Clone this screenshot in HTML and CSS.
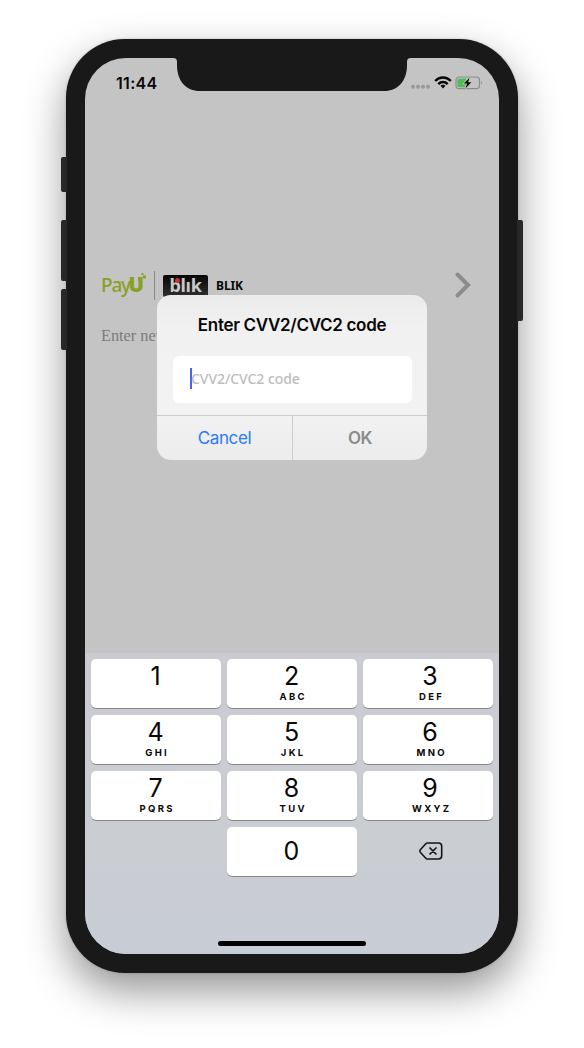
FILE: index.html
```html
<!DOCTYPE html>
<html lang="en">
<head>
<meta charset="utf-8">
<title>Enter CVV2/CVC2 code</title>
<link rel="stylesheet" href="styles.css">
</head>
<body>
<div class="phone">
  <i class="button mute"></i><i class="button vol-up"></i><i class="button vol-down"></i><i class="button power"></i>
  <div class="screen">
    <svg class="notch" width="238" height="33" viewBox="0 0 238 33"><path d="M0 0C3 0 4 1.500 4 4V7C4 23 13 33 27 33H211C225 33 234 23 234 7V4C234 1.500 235 0 238 0Z" fill="#191919"/></svg>
    <header class="status">
      <span class="time">11:44</span>
      <svg class="indicators" width="74" height="18" viewBox="0 0 74 18">
        <g fill="#999"><circle cx="5" cy="12.700" r="2"/><circle cx="10" cy="12.700" r="2"/><circle cx="15" cy="12.700" r="2"/><circle cx="20" cy="12.700" r="2"/></g>
        <g fill="none" stroke="#080808" stroke-width="2.500"><path d="M27.200 7C31.500 2.400 38.500 2.400 42.800 7"/><path d="M30.300 10.100C32.900 7.400 37.100 7.400 39.700 10.100"/></g>
        <path d="M32.500 11.800Q35 9.900 37.500 11.800L35 14.500Z" fill="#080808"/>
        <rect x="48" y="3" width="23.500" height="11.700" rx="3.200" fill="none" stroke="#8c8c8c" stroke-width="1.200"/>
        <path d="M73.100 6.800Q74.900 8.800 73.100 10.800Z" fill="#858585"/>
        <path d="M51 4.500H58.800L55.500 9.400H58L57 13.200H51Q49.300 13.200 49.300 11.500V6.200Q49.300 4.500 51 4.500Z" fill="#4fbd59"/>
        <path d="M61.600 3.800L55.800 9.500H59.100L57.400 14.400L63.300 8.300H60.100Z" fill="#080808" stroke="#c4c4c4" stroke-width="1.400" paint-order="stroke"/>
      </svg>
    </header>
    <main class="content">
      <div class="method">
        <div class="payu"><span class="pay">Pay</span><span class="u">U</span><svg class="pixels" width="9" height="9" viewBox="0 0 9 9"><path d="M3.500 0H5.500V2H3.500ZM5 2.500H8V5.500H5ZM0 4H4V8H0Z" fill="#8ba325"/></svg></div>
        <i class="divider"></i>
        <div class="blik-logo"><i class="dot"></i>blık</div>
        <strong class="method-name">BLIK</strong>
        <svg class="chevron" width="18" height="28" viewBox="0 0 18 28"><path d="M3.500 3.500L14 14L3.500 24.500" fill="none" stroke="#8c8c8c" stroke-width="4" stroke-linecap="round"/></svg>
      </div>
      <p class="new-card">Enter new</p>
    </main>
    <section class="keyboard">
      <div class="key"><b>1</b></div>
      <div class="key"><b>2</b><small>ABC</small></div>
      <div class="key third"><b>3</b><small>DEF</small></div>
      <div class="key"><b>4</b><small>GHI</small></div>
      <div class="key"><b>5</b><small>JKL</small></div>
      <div class="key third"><b>6</b><small>MNO</small></div>
      <div class="key"><b>7</b><small>PQRS</small></div>
      <div class="key"><b>8</b><small>TUV</small></div>
      <div class="key third"><b>9</b><small>WXYZ</small></div>
      <div class="blank"></div>
      <div class="key zero"><b>0</b></div>
      <div class="delete"><svg width="26" height="20" viewBox="0 0 26 20" fill="none" stroke="#151515" stroke-linejoin="round" stroke-linecap="round"><path d="M9.300 2H20.500Q23.700 2 23.700 5.200V14.800Q23.700 18 20.500 18H9.300Q8.500 18 7.800 17.200L2.300 11.300Q1.300 10 2.300 8.700L7.800 2.800Q8.500 2 9.300 2Z" stroke-width="1.600"/><path d="M12 7L18 13M18 7L12 13" stroke-width="1.700"/></svg></div>
    </section>
    <div class="home"></div>
    <div class="dialog">
      <h1>Enter CVV2/CVC2 code</h1>
      <div class="field"><i class="caret"></i><span>CVV2/CVC2 code</span></div>
      <div class="actions"><span class="cancel">Cancel</span><span class="ok">OK</span></div>
    </div>
  </div>
</div>
</body>
</html>
```

FILE: styles.css
```css
* { box-sizing: border-box; }
html { background: #fff; }
body { margin: 0; height: 1048px; padding: 39px 66px 0; overflow: hidden; font-family: Inter, "Liberation Sans", sans-serif; color: #080808; }
.phone { position: relative; width: 452px; height: 934px; padding: 19px; border-radius: 59px; background: #191919; box-shadow: 0 0 2px rgba(0,0,0,.25), 0 18px 42px rgba(0,0,0,.42); }
.screen { position: relative; display: flex; flex-direction: column; height: 896px; border-radius: 41px; overflow: hidden; background: #c4c4c4; }

/* hardware buttons */
.button { position: absolute; width: 6px; background: #282828; left: -5px; border-radius: 2px 0 0 2px; }
.mute { top: 118px; height: 35px; }
.vol-up { top: 181px; height: 61px; }
.vol-down { top: 250px; height: 61px; }
.power { left: auto; right: -5px; top: 181px; height: 101px; border-radius: 0 2px 2px 0; }
.notch { position: absolute; left: 88px; top: 0; }

.status { display: flex; justify-content: space-between; height: 212px; padding: 16px 17px 0 31px; }
.time { font-size: 16px; line-height: 18px; font-weight: 600; letter-spacing: .3px; }
.indicators { overflow: visible; }

.content { flex: 1; padding: 0 27px 0 16px; }
.method { display: flex; align-items: center; height: 30px; }
.payu { position: relative; display: flex; align-items: baseline; width: 53px; height: 29px; line-height: 29px; color: #88a022; }
.pay { font: 500 19px/29px "Noto Sans", sans-serif; letter-spacing: -1.2px; }
.u { font: 900 20px/29px Inter, sans-serif; margin-left: -1px; }
.pixels { position: absolute; left: 37px; top: 2px; }
.divider { width: 1px; height: 29px; background: #888; }
.blik-logo { position: relative; width: 45px; height: 22px; margin: 1px 8px 0; border-radius: 2px; background: linear-gradient(#050505, #303030); color: #c9c9c9; font: 700 18px/21px "Noto Sans", sans-serif; text-align: center; letter-spacing: -.3px; }
.dot { position: absolute; left: 12px; top: 3px; width: 5px; height: 5px; border-radius: 50%; background: #cf3030; }
.method-name { margin-top: 2px; font: 700 12px/16px "Noto Sans", sans-serif; letter-spacing: -.1px; }
.chevron { margin-left: auto; }
.new-card { margin: 25px 0 0; font: 16.3px/22px "Liberation Serif", serif; color: #7b7b7b; }

.keyboard { display: grid; grid-template-columns: repeat(3, 130px); grid-auto-rows: 49px; gap: 7px 6px; height: 301px; padding: 6px 6px 0; background: linear-gradient(#c9cbd1, #cacdd2 65%, #c8ccd5); }
.key { display: flex; flex-direction: column; align-items: center; border-radius: 5px; background: #fff; box-shadow: 0 1px 0 #85878b; }
.third { padding-left: 5px; }
.key b { height: 31px; margin-right: 1px; font-size: 25px; line-height: 35px; font-weight: 400; }
.key small { font-size: 9.5px; line-height: 13px; font-weight: 700; letter-spacing: 2.3px; margin-right: -2.3px; }
.key.zero b { line-height: 48px; }
.delete { display: flex; align-items: center; justify-content: center; padding: 0 0 2px 5px; }
.home { position: absolute; left: 133px; bottom: 8px; width: 148px; height: 5px; border-radius: 3px; background: #000; }

.dialog { position: absolute; left: 72px; top: 237px; width: 270px; height: 165px; padding-top: 20px; border-radius: 14px; overflow: hidden; background: linear-gradient(#ebebeb, #f1f1f1 20%, #f2f2f2 70%, #ececec); }
.dialog h1 { margin: 0; font-size: 17px; line-height: 20px; font-weight: 600; text-align: center; letter-spacing: -.32px; }
.field { display: flex; align-items: center; height: 47px; margin: 21px 15px 12px 16px; padding: 0 0 2px 17px; border-radius: 6px; background: #fff; font: 500 14px/20px "Noto Sans", sans-serif; letter-spacing: -.05px; color: #bdbdbd; }
.caret { width: 2px; height: 21px; margin-right: -1px; background: #4663f2; }
.actions { display: grid; grid-template-columns: 136px 1fr; height: 45px; border-top: 1px solid #cecece; font-size: 17px; line-height: 45px; letter-spacing: -.4px; text-align: center; }
.cancel { color: #287aff; border-right: 1px solid #cecece; }
.ok { color: #8b8b8b; font-weight: 600; }
```
